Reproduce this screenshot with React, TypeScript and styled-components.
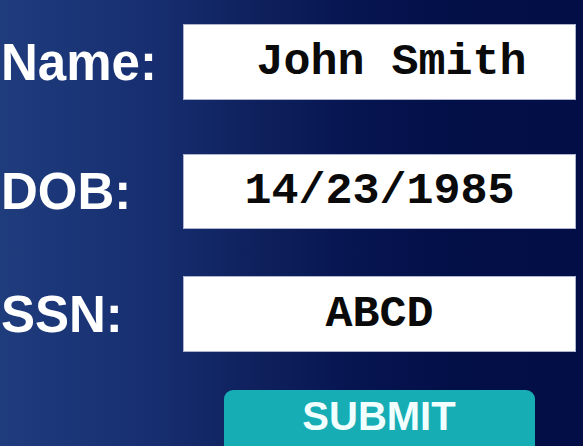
import React from "react";
import styled, { createGlobalStyle } from "styled-components";

const Global = createGlobalStyle`
  html, body {
    margin: 0;
    padding: 0;
    width: 583px;
    height: 446px;
    overflow: hidden;
  }
  #root {
    width: 583px;
    height: 446px;
  }
`;

const Screen = styled.div`
  width: 583px;
  height: 446px;
  box-sizing: border-box;
  padding: 24px 7px 0 0;
  background: linear-gradient(
    to right,
    #1f3c7d 0%,
    #172f71 25%,
    #0e205c 45%,
    #061450 62%,
    #030f47 78%,
    #020e45 100%
  );
  overflow: hidden;
  display: grid;
  grid-template-columns: 183px 393px;
  grid-auto-rows: auto;
  align-content: start;
`;

const Label = styled.div<{ $top: number }>`
  grid-column: 1;
  margin-top: ${(p) => p.$top}px;
  align-self: center;
  padding-left: 1px;
  color: #ffffff;
  font-family: "Liberation Sans", Arial, sans-serif;
  font-weight: 700;
  font-size: 51px;
  line-height: 1;
`;

const Field = styled.div<{ $top: number; $height: number; $shift?: number }>`
  grid-column: 2;
  margin-top: ${(p) => p.$top}px;
  height: ${(p) => p.$height}px;
  box-sizing: border-box;
  background: #ffffff;
  border: 1px solid #aeb3d2;
  display: flex;
  align-items: center;
  justify-content: center;
  padding-left: ${(p) => p.$shift ?? 0}px;
  color: #0a0a0a;
  font-family: "Liberation Mono", "Courier New", monospace;
  font-weight: 700;
  font-size: 45px;
  line-height: 1;
  white-space: pre;
`;

const Submit = styled.button`
  grid-column: 2;
  justify-self: center;
  margin-top: 38px;
  margin-left: -1px;
  width: 311px;
  height: 66px;
  border: none;
  border-radius: 9px;
  background: #17adb5;
  color: #f2ffff;
  font-family: "Liberation Sans", Arial, sans-serif;
  font-weight: 700;
  font-size: 40px;
  line-height: 1;
  padding: 0 0 14px 0;
  display: flex;
  align-items: center;
  justify-content: center;
  cursor: pointer;
`;

const rows = [
  { label: "Name:", value: "John Smith", top: 0, height: 76, shift: 24 },
  { label: "DOB:", value: "14/23/1985", top: 54, height: 75, shift: 0 },
  { label: "SSN:", value: "ABCD", top: 47, height: 76, shift: 0 },
];

export default function App() {
  return (
    <>
      <Global />
      <Screen>
        {rows.map((r) => (
          <React.Fragment key={r.label}>
            <Label $top={r.top}>{r.label}</Label>
            <Field $top={r.top} $height={r.height} $shift={r.shift}>
              {r.value}
            </Field>
          </React.Fragment>
        ))}
        <Submit>SUBMIT</Submit>
      </Screen>
    </>
  );
}
